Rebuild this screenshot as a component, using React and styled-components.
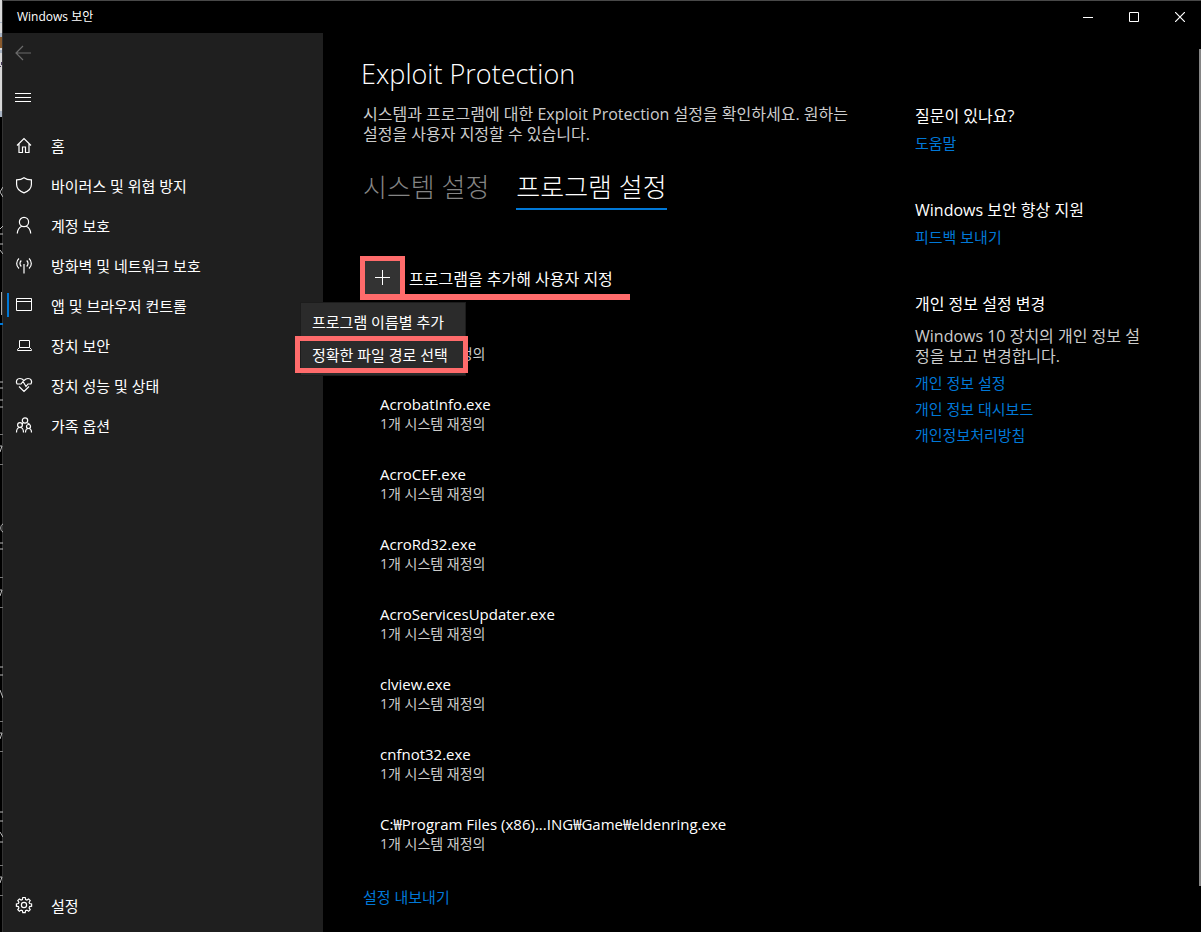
import React from 'react';
import styled, { createGlobalStyle } from 'styled-components';

const GlobalStyle = createGlobalStyle`
    * {
        box-sizing: border-box;
    }

    body {
        margin: 0;
        background: #000;
        color: #fff;
        font-family: 'Open Sans', 'Noto Sans CJK KR', sans-serif;
        font-size: 15px;
        line-height: 20px;
    }

    button {
        padding: 0;
        border: 0;
        background: none;
        color: inherit;
        font: inherit;
        text-align: left;
    }
`;

const Desktop = styled.div`
    display: flex;
    min-height: 100vh;
`;

const Behind = styled.div`
    flex: none;
    width: 3px;
    overflow: hidden;

    svg {
        display: block;
    }
`;

const Window = styled.div`
    flex: 1;
    display: flex;
    flex-direction: column;
    border-top: 1px solid #484848;
`;

const TitleBar = styled.header`
    display: flex;
    align-items: center;
    justify-content: space-between;
    height: 32px;
    padding-left: 14px;
    font-size: 12px;
`;

const Controls = styled.div`
    display: flex;
    gap: 4px;

    button {
        display: flex;
        align-items: center;
        justify-content: center;
        width: 42px;
        height: 32px;
    }
`;

const Body = styled.div`
    flex: 1;
    display: flex;
`;

const Sidebar = styled.aside`
    flex: none;
    display: flex;
    flex-direction: column;
    width: 320px;
    padding-bottom: 6px;
    background: #1f1f1f;
`;

const IconButton = styled.button`
    display: flex;
    align-items: center;
    height: 40px;
    margin-bottom: 4px;
    padding-left: 12px;
    color: ${props => (props.$dim ? '#6b6b6b' : '#fff')};
`;

const Nav = styled.nav`
    flex: 1;
    padding-top: 5px;
`;

const NavItem = styled.a`
    display: flex;
    align-items: center;
    gap: 18px;
    height: 40px;
    padding-left: 4px;
    color: #fff;
    text-decoration: none;

    &::before {
        content: '';
        width: 2px;
        height: 24px;
        margin: 0 -12px 2px 0;
        background: ${props => (props.$active ? '#0078d7' : 'transparent')};
    }

    svg {
        margin-bottom: 2px;
    }
`;

const Page = styled.main`
    flex: 1;
    display: flex;
    justify-content: space-between;
    padding: 23px 0 24px 38px;
`;

const Content = styled.section`
    flex: 1;
    max-width: 500px;
`;

const Title = styled.h1`
    margin: 0 0 12px;
    font-size: 27px;
    font-weight: 300;
    line-height: 36px;
`;

const Description = styled.p`
    margin: 0 0 26px 2px;
    color: #ccc;
    font-size: 16px;
    word-break: keep-all;
`;

const Tabs = styled.div`
    display: flex;
    gap: 27px;
    margin: 0 0 46px 2px;
`;

const Tab = styled.button`
    display: flex;
    height: 40px;
    border-bottom: 2px solid ${props => (props.$active ? '#0078d7' : 'transparent')};
    color: ${props => (props.$active ? '#fff' : '#858585')};
    font-size: 26px;
    font-weight: 300;
    line-height: 34px;
`;

const AddRow = styled.div`
    position: relative;
    width: 270px;
    margin-left: -1px;
    border-bottom: 6px solid #ff6b6b;
`;

const AddButton = styled.button`
    display: flex;
    align-items: flex-end;
    gap: 4px;
    font-size: 16px;
    line-height: 30px;
`;

const Plus = styled.span`
    display: flex;
    align-items: center;
    justify-content: center;
    width: 45px;
    height: 38px;
    border: 5px solid #ff6b6b;
    border-bottom: 0;
    background: #333;
`;

const Menu = styled.div`
    position: absolute;
    top: 46px;
    left: -60px;
    width: 166px;
    height: 74px;
    padding-top: 5px;
    border: 1px solid #1c1c1c;
    background: #2b2b2b;
`;

const MenuItem = styled.button`
    display: block;
    width: 173px;
    height: ${props => (props.$marked ? '37px' : '28px')};
    margin-left: -6px;
    padding-left: ${props => (props.$marked ? '12px' : '17px')};
    border: ${props => (props.$marked ? '5px solid #ff6b6b' : '0')};
    white-space: nowrap;
`;

const Programs = styled.ul`
    margin: 24px 0 33px 19px;
    padding: 0;
    list-style: none;
`;

const Program = styled.li`
    height: 40px;
    margin-bottom: 30px;
`;

const Override = styled.div`
    color: #ccc;
    font-size: 14px;
`;

const Link = styled.a`
    display: block;
    width: fit-content;
    color: #0078d7;
    text-decoration: none;
`;

const Footer = styled.footer`
    padding-left: 2px;
`;

const Aside = styled.aside`
    flex: none;
    width: 284px;
    padding: 50px 48px 0 0;
`;

const Help = styled.section`
    display: flex;
    flex-direction: column;
    gap: 6px;
    margin-bottom: 47px;
`;

const HelpTitle = styled.h2`
    margin: 0 0 1px;
    font-size: 16px;
    font-weight: 400;
    line-height: 20px;
`;

const HelpText = styled.p`
    margin: 5px 0 1px;
    color: #ccc;
    font-size: 16px;
`;

const Scrollbar = styled.div`
    flex: none;
    width: 2px;
    margin: 16px 0 46px;
    background: #858585;
`;

const Icon = ({ children, size = 18 }) => (
    <svg width={size} height={size} viewBox={`0 0 ${size} ${size}`} fill="none" stroke="currentColor" strokeWidth="1.2" aria-hidden="true">
        {children}
    </svg>
);

const icons = {
    home: <path d="M2 9.500 9 2.500l7 7M4 8v8.500h3.500v-5.500h3v5.500H14V8" />,
    shield: <path d="M9 1.800C7.200 3.200 4.800 3.900 1.600 3.900v4.600c0 4 3.200 6.800 7.400 8.400 4.200-1.600 7.400-4.400 7.400-8.400V3.900C13.200 3.900 10.800 3.200 9 1.800z" />,
    user: (
        <>
            <circle cx="9" cy="6" r="4.600" />
            <path d="M2.300 17.500c.2-3.800 1.900-6.200 4.500-7.300M15.700 17.500c-.2-3.800-1.900-6.200-4.500-7.300" />
        </>
    ),
    network: (
        <path d="M9 8v9.500M4 2.500C.9 5.200.9 9.800 4 12.500M14 2.500c3.100 2.700 3.100 7.300 0 10M6.300 4.500c-1.800 1.700-1.800 4.300 0 6M11.700 4.500c1.800 1.700 1.800 4.300 0 6" />
    ),
    browser: <path d="M1.500 2.500h15v12h-15zM1.500 5.500h15" strokeWidth="1" />,
    device: <path d="M4.500 4.500h10v7h-10zM4.500 11.500l-2 2v1h14v-1l-2-2" strokeWidth="1" />,
    health: (
        <path d="M2 8C.5 5 2 2.500 5 2.500c2 0 3 1 4 2 1-1 2-2 4-2 3 0 4.500 2.500 3 5.500M1.800 8H6l2-2.500 3 5L13 8h3.200M4 10.500l5 5 5-5" />
    ),
    family: (
        <>
            <circle cx="10" cy="4.500" r="2.700" />
            <circle cx="5" cy="9" r="2.400" />
            <circle cx="13.500" cy="10.500" r="2" />
            <path d="M1.500 16.500c0-3 1.300-5 3.500-5s3.500 2 3.500 5M10.500 16.500c0-2.500 1-4 3-4s3 1.500 3 4M8.200 6.800C7.500 7.300 7.300 8 7.300 8.500M12 6.800c2 .8 2.700 1.200 2.800 2" />
        </>
    ),
    settings: (
        <>
            <circle cx="9" cy="9" r="2.600" />
            <path d="M7.800 1.500h2.400l.4 2 1.300.5 1.700-1.100 1.600 1.600-1.100 1.700.5 1.300 2 .4v2.300l-2 .4-.5 1.300 1.100 1.700-1.600 1.600-1.700-1.100-1.300.5-.4 2H7.800l-.4-2-1.300-.5-1.700 1.100-1.600-1.600 1.100-1.700-.5-1.300-2-.4V7.900l2-.4.500-1.300-1.100-1.700 1.600-1.600L6.100 4l1.300-.5z" />
        </>
    ),
};

const navItems = [
    { icon: 'home', label: '홈' },
    { icon: 'shield', label: '바이러스 및 위협 방지' },
    { icon: 'user', label: '계정 보호' },
    { icon: 'network', label: '방화벽 및 네트워크 보호' },
    { icon: 'browser', label: '앱 및 브라우저 컨트롤', active: true },
    { icon: 'device', label: '장치 보안' },
    { icon: 'health', label: '장치 성능 및 상태' },
    { icon: 'family', label: '가족 옵션' },
];

const programs = [
    'Acrobat.exe',
    'AcrobatInfo.exe',
    'AcroCEF.exe',
    'AcroRd32.exe',
    'AcroServicesUpdater.exe',
    'clview.exe',
    'cnfnot32.exe',
    'C:₩Program Files (x86)...ING₩Game₩eldenring.exe',
];

// Sliver of the windows that sit behind this one
const BehindEdge = () => (
    <svg width="3" height="932" viewBox="0 0 3 932" aria-hidden="true">
        <path fill="#d8d8d8" d="M0 0h2v117H0z" />
        <path fill="#333" d="M2 0h1v932H2z" />
        <path fill="#8a5a2c" d="M0 37h2v11H0z" />
        <path fill="#a9b4c4" d="M0 22h2v1H0zM0 33h2v4H0zM0 50h2v3H0zM0 111h2v6H0z" />
        <path fill="#4a3a5c" d="M0 66h1v1H0zM1 62h1v3H1z" />
        <path stroke="#bbb" fill="none" d="M3 187l-3 5 3 5M0 229l3-3M0 234h3M0 244h3M0 250l3 4M0 382h3M0 388h3M0 400h3M0 407h3M3 524c-3 1-3 7 0 8M0 543h3M0 549h3M0 667h3M0 675h3M0 690l3 8M0 812h3M0 821h3M0 832l3 5M0 842h3" />
        <path stroke="#777" d="M0 434.500h3M0 464.500h3M0 577.500h3M0 607.500h3M0 721.500h3M0 751.500h3M0 865.500h3M0 895.500h3" />
        <path stroke="#bbb" fill="none" d="M0 446h2l-2 6M0 590h2l-2 6M0 733h2l-2 6M0 877h2l-2 6" />
        <path fill="#aaa" d="M1 292h1v23H1z" />
        <path fill="#0078d7" d="M0 323h3v2H0z" />
    </svg>
);

const NavLink = ({ icon, label, active }) => (
    <NavItem href="#" $active={active}>
        <Icon>{icons[icon]}</Icon>
        {label}
    </NavItem>
);

const App = () => {
    return (
        <Desktop>
            <GlobalStyle />
            <Behind>
                <BehindEdge />
            </Behind>
            <Window>
                <TitleBar>
                    Windows 보안
                    <Controls>
                        <button aria-label="최소화">
                            <Icon size={10}><path d="M0 5.500h10" strokeWidth="1" /></Icon>
                        </button>
                        <button aria-label="최대화">
                            <Icon size={10}><path d="M.5.5h9v9h-9z" strokeWidth="1" /></Icon>
                        </button>
                        <button aria-label="닫기">
                            <Icon size={10}><path d="M0 0l10 10M10 0L0 10" /></Icon>
                        </button>
                    </Controls>
                </TitleBar>
                <Body>
                    <Sidebar>
                        <IconButton $dim aria-label="뒤로">
                            <Icon size={16}><path d="M16 8H1M8 1L1 8l7 7" /></Icon>
                        </IconButton>
                        <IconButton aria-label="메뉴">
                            <Icon size={16}><path d="M0 4.500h16M0 8.500h16M0 12.500h16" strokeWidth="1" /></Icon>
                        </IconButton>
                        <Nav>
                            {navItems.map(item => (
                                <NavLink key={item.icon} {...item} />
                            ))}
                        </Nav>
                        <NavLink icon="settings" label="설정" />
                    </Sidebar>
                    <Page>
                        <Content>
                            <Title>Exploit Protection</Title>
                            <Description>
                                시스템과 프로그램에 대한 Exploit Protection 설정을 확인하세요. 원하는 설정을 사용자 지정할 수 있습니다.
                            </Description>
                            <Tabs>
                                <Tab>시스템 설정</Tab>
                                <Tab $active>프로그램 설정</Tab>
                            </Tabs>
                            <AddRow>
                                <AddButton>
                                    <Plus>
                                        <Icon size={15}><path d="M7.500 0v15M0 7.500h15" strokeWidth="1" /></Icon>
                                    </Plus>
                                    프로그램을 추가해 사용자 지정
                                </AddButton>
                                <Menu>
                                    <MenuItem>프로그램 이름별 추가</MenuItem>
                                    <MenuItem $marked>정확한 파일 경로 선택</MenuItem>
                                </Menu>
                            </AddRow>
                            <Programs>
                                {programs.map(name => (
                                    <Program key={name}>
                                        {name}
                                        <Override>1개 시스템 재정의</Override>
                                    </Program>
                                ))}
                            </Programs>
                            <Footer>
                                <Link href="#">설정 내보내기</Link>
                            </Footer>
                        </Content>
                        <Aside>
                            <Help>
                                <HelpTitle>질문이 있나요?</HelpTitle>
                                <Link href="#">도움말</Link>
                            </Help>
                            <Help>
                                <HelpTitle>Windows 보안 향상 지원</HelpTitle>
                                <Link href="#">피드백 보내기</Link>
                            </Help>
                            <Help>
                                <HelpTitle>개인 정보 설정 변경</HelpTitle>
                                <HelpText>Windows 10 장치의 개인 정보 설정을 보고 변경합니다.</HelpText>
                                <Link href="#">개인 정보 설정</Link>
                                <Link href="#">개인 정보 대시보드</Link>
                                <Link href="#">개인정보처리방침</Link>
                            </Help>
                        </Aside>
                    </Page>
                    <Scrollbar />
                </Body>
            </Window>
        </Desktop>
    );
};

export default App;
